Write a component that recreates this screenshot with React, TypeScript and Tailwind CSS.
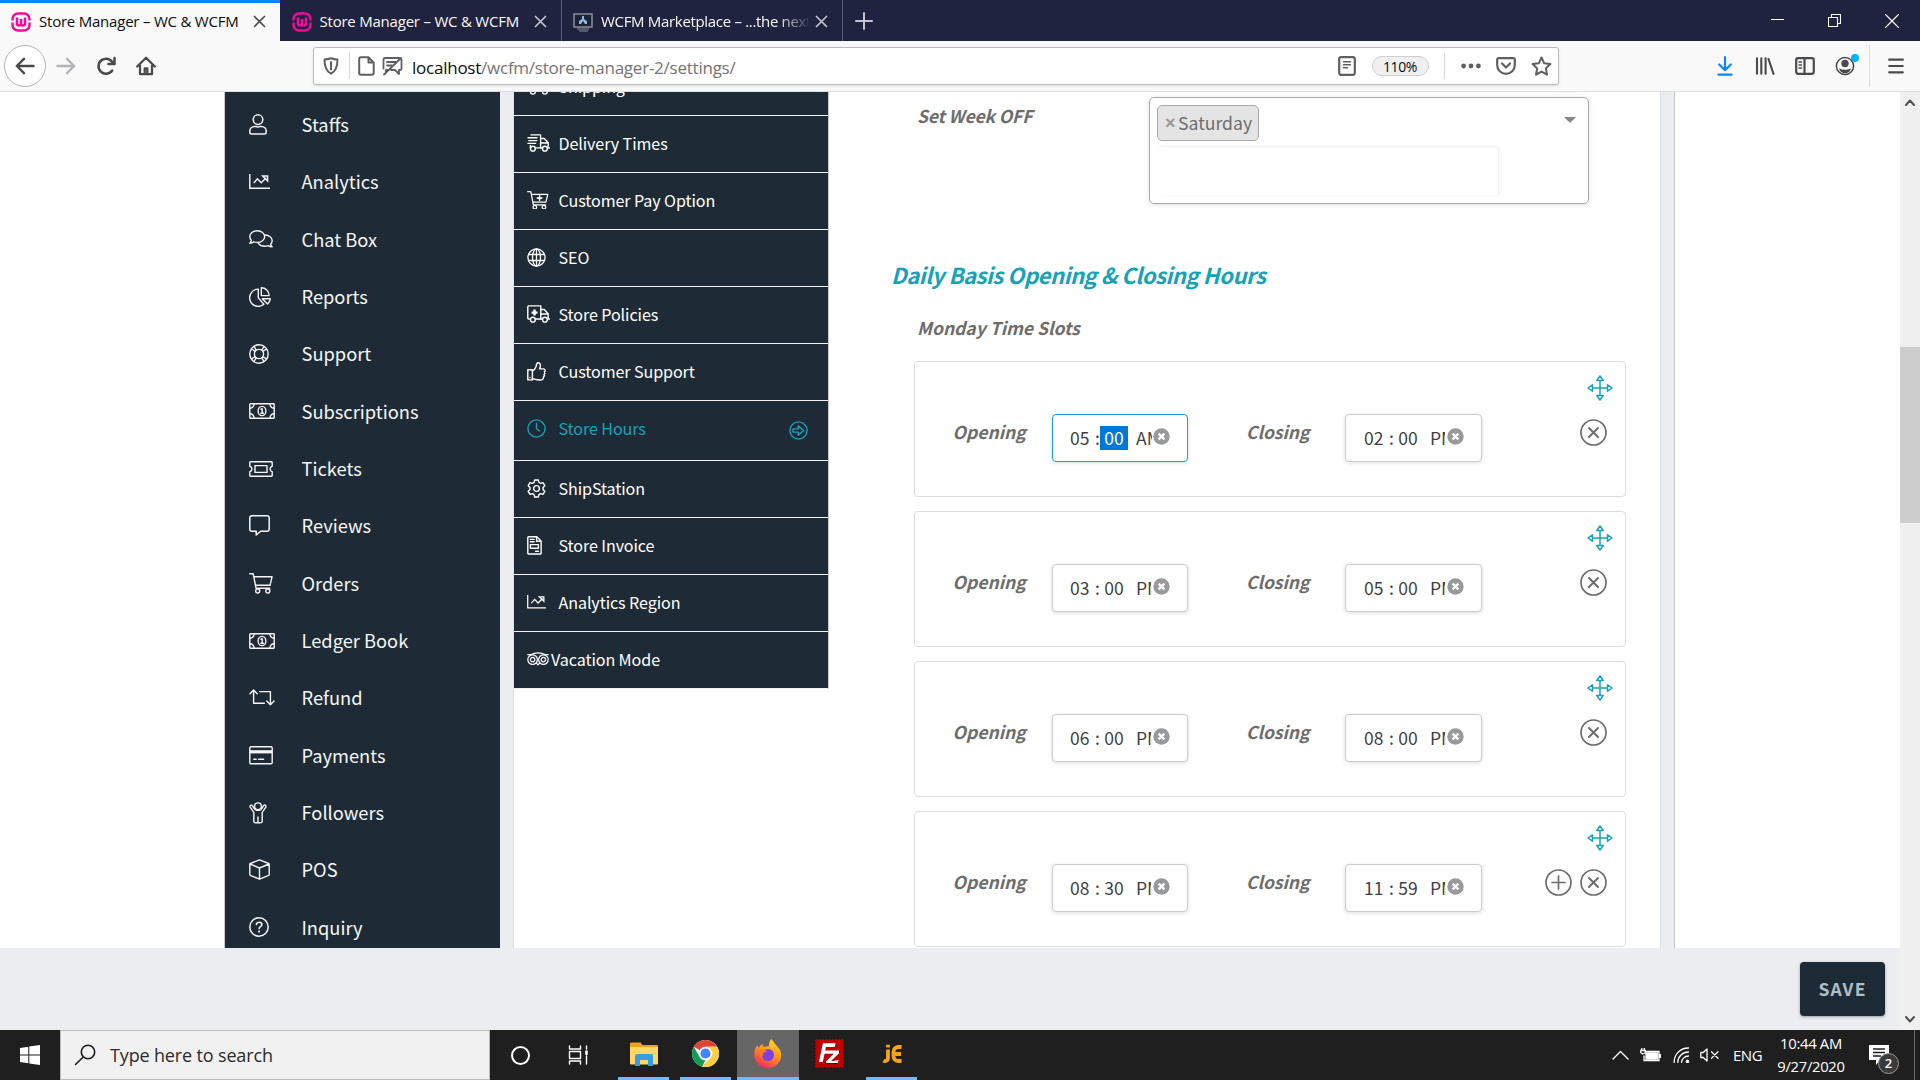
import type { ReactNode } from "react";
import clsx from "clsx";
import { SiFilezilla } from "react-icons/si";

type IconProps = {
  w: number;
  h: number;
  sw?: number;
  className?: string;
  children: ReactNode;
};

const Icon = ({ w, h, sw = 1.5, className, children }: IconProps) => (
  <svg
    width={w}
    height={h}
    viewBox={`0 0 ${w} ${h}`}
    fill="none"
    stroke="currentColor"
    strokeWidth={sw}
    strokeLinecap="round"
    strokeLinejoin="round"
    className={clsx("shrink-0", className)}
  >
    {children}
  </svg>
);

/* ---------- menu icons ---------- */

const UserIcon = () => (
  <Icon w={18} h={21}>
    <circle cx="9" cy="5.6" r="4.8" />
    <path d="M5.6 12.4h1.1q2.3 1 4.6 0h1.1a4.8 4.8 0 0 1 4.8 4.8v1.3a1.5 1.5 0 0 1-1.5 1.5H2.3a1.5 1.5 0 0 1-1.5-1.5v-1.3a4.8 4.8 0 0 1 4.8-4.8Z" />
  </Icon>
);

const ChartIcon = ({ w = 21, h = 16 }) => (
  <svg width={w} height={h} viewBox="0 0 21 16" fill="none" stroke="currentColor" strokeWidth="1.4" className="shrink-0">
    <path d="M.8 0v14.3H21M4.8 9l3.6-4.2 3.8 4 5-5" />
    <path d="M13.6 2h5v5Z" />
  </svg>
);

const ChatIcon = () => (
  <Icon w={24} h={18} sw={1.4}>
    <path d="M8.2.8c4.2 0 7.5 2.6 7.5 5.8s-3.300 5.800-7.500 5.800c-1.200 0-2.400-.2-3.400-.6-.9.700-2.400 1.400-4 1.400.8-.9 1.400-1.900 1.600-2.800C1.300 9.400.8 8 .8 6.600.8 3.400 4 .8 8.200.8Z" />
    <path d="M16.200 5c3.900.1 7 2.500 7 5.600 0 1.400-.6 2.600-1.600 3.600.2 1 .8 1.900 1.500 2.600-1.500 0-3-.5-3.900-1.200-1.100.4-2.200.6-3.500.6-3 0-5.500-1.300-6.700-3.300" />
  </Icon>
);

const PieIcon = () => (
  <Icon w={22} h={20} sw={1.4}>
    <path d="M9.300 2.100v8.800l5.600 6.300a8.600 8.600 0 1 1-5.600-15.100Z" />
    <path d="M12.300.8a7.800 7.800 0 0 1 7.800 7.800h-7.800ZM13.300 11.800h8a7.800 7.800 0 0 1-2.700 5.200Z" />
  </Icon>
);

const RingIcon = () => (
  <Icon w={20} h={20} sw={1.4}>
    <circle cx="10" cy="10" r="9.200" />
    <circle cx="10" cy="10" r="4.600" />
    <path d="m2.600 5 3.600 2.300M5 2.600l2.300 3.600M15 2.600l-2.300 3.600M17.400 5l-3.600 2.300M2.600 15l3.600-2.300M5 17.400l2.300-3.600M15 17.400l-2.300-3.600M17.400 15l-3.600-2.300" />
  </Icon>
);

const MoneyIcon = () => (
  <Icon w={26} h={16} sw={1.4}>
    <rect x=".8" y=".8" width="24.400" height="14.400" rx=".6" />
    <path d="M1 5.200A4 4 0 0 0 5 1M21 1a4 4 0 0 0 4 4.200M1 10.800A4 4 0 0 1 5 15M21 15a4 4 0 0 1 4-4.200" />
    <ellipse cx="13" cy="8" rx="3.900" ry="4.600" />
    <path d="M12 6.200 13.200 5.700v4.600M11.900 10.300h2.600" />
  </Icon>
);

const TicketIcon = () => (
  <Icon w={24} h={16} sw={1.4}>
    <path d="M1.500.8h21a.7.7 0 0 1 .7.7v3.700a2.900 2.900 0 0 0 0 5.600v3.700a.7.7 0 0 1-.7.7h-21a.7.7 0 0 1-.7-.7v-3.700a2.900 2.900 0 0 0 0-5.600V1.500a.7.7 0 0 1 .7-.7Z" />
    <rect x="6" y="4.600" width="12" height="6.800" />
  </Icon>
);

const ReviewIcon = () => (
  <Icon w={21} h={21}>
    <path d="M2.800.8h15.400a2 2 0 0 1 2 2v11.400a2 2 0 0 1-2 2h-6.600L7.200 20v-3.800H2.800a2 2 0 0 1-2-2V2.800a2 2 0 0 1 2-2Z" />
  </Icon>
);

const CartIcon = ({ plus, scale = 1 }: { plus?: boolean; scale?: number }) => (
  <svg width={24 * scale} height={21 * scale} viewBox="0 0 24 21" fill="none" stroke="currentColor" strokeWidth="1.4" strokeLinecap="round" strokeLinejoin="round" className="shrink-0">
    <path d="M.8.8h3.400l2.900 14.500h13.700M4.900 3.700h18.200l-2.100 8.600H6.600" />
    <circle cx="8.700" cy="18" r="2" />
    <circle cx="18.800" cy="18" r="2" />
    {plus && <path d="M14 5.400v5M11.500 7.900h5" strokeWidth="1.800" />}
  </svg>
);

const RefundIcon = () => (
  <Icon w={26} h={17} sw={1.4}>
    <path d="M1 4.800 4.600 1l3.600 3.800M4.600 1.400v12.900h10.800M10.600 2.600h10.800v12.900M17.800 12l3.600 3.800L25 12" />
  </Icon>
);

const CardIcon = () => (
  <Icon w={24} h={19} sw={1.4}>
    <rect x=".8" y=".8" width="22.400" height="17" rx="1.200" />
    <path d="M1 5.800h22" strokeWidth="3.200" strokeLinecap="butt" />
    <path d="M4.800 13.300h2.400M9.600 13.300h5" />
  </Icon>
);

const ChildIcon = () => (
  <Icon w={18} h={22} sw={1.4}>
    <circle cx="9" cy="4.300" r="3.400" />
    <path d="M5.600 7.200 3.400 3.700a1.300 1.300 0 0 0-2.200 1.400l3.600 5.200v9a1.400 1.400 0 0 0 1.400 1.400h5.600a1.400 1.400 0 0 0 1.400-1.400v-9l3.600-5.200a1.300 1.300 0 0 0-2.200-1.400l-2.200 3.500M7 8.200h4M9 15v5.500" />
  </Icon>
);

const CubeIcon = () => (
  <Icon w={21} h={21} sw={1.4}>
    <path d="m10.500.8 9.200 3.700a.8.8 0 0 1 .5.800v10.200a.9.900 0 0 1-.5.800l-9.200 3.900-9.200-3.900a.9.900 0 0 1-.5-.8V5.300a.8.800 0 0 1 .5-.8ZM1 5l9.500 4 9.500-4M10.500 9v11" />
  </Icon>
);

const HelpIcon = () => (
  <Icon w={20} h={20} sw={1.5}>
    <circle cx="10" cy="10" r="9.200" />
    <path d="M7.300 7.600c.2-1.600 1.400-2.300 2.800-2.300 1.600 0 2.800 1 2.800 2.400 0 2-2.800 2-2.800 4" />
    <path d="M10.100 14.500v.1" strokeWidth="2.200" />
  </Icon>
);

const TruckIcon = ({ kind }: { kind: "fast" | "medic" }) => (
  <Icon w={23} h={18} sw={1.4}>
    {kind === "fast" ? (
      <path d="M4 .9h9.600v13H8.400M1 3.700h9M1.800 6.600h8M1 9.400h7.600M3.400 11.500v2.500" />
    ) : (
      <path d="M3.400 14H1.600a.8.800 0 0 1-.8-.8V1.700a.8.800 0 0 1 .8-.8h12.200V14H8.400" />
    )}
    {kind === "medic" && <path d="M7.500 4.600v6M4.500 7.600h6" strokeWidth="2.400" strokeLinecap="butt" />}
    <path d="M13.800 4.500h3.400l4 4.200V14h1.200M13.800 9H21M13.800 14h1.400" />
    <circle cx="5.900" cy="14.700" r="2.400" />
    <circle cx="17.900" cy="14.700" r="2.400" />
  </Icon>
);

const GlobeIcon = () => (
  <Icon w={19} h={19} sw={1.3}>
    <circle cx="9.500" cy="9.500" r="8.600" />
    <ellipse cx="9.500" cy="9.500" rx="4" ry="8.600" />
    <path d="M1.600 6.500h15.800M1.600 12.500h15.800M9.500 1v17" />
  </Icon>
);

const ThumbIcon = () => (
  <Icon w={19} h={19} sw={1.4}>
    <path d="M.8 7.700h4.600v10.200H.8Z" />
    <path d="M5.400 9.200c1.800-1.200 3-2.700 3.600-4.400.3-1 .3-4 2-4 2.700 0 3 3 1.500 6.100h4a1.600 1.600 0 0 1 .8 3c.8.900.6 2-.3 2.700.5.900.2 1.900-.6 2.500.2 1.800-.9 2.900-3 2.900-3.800 0-5.300-.6-8-1.400" />
    <path d="M3 15.400v.1" />
  </Icon>
);

const ClockIcon = () => (
  <Icon w={19} h={19} sw={1.4}>
    <circle cx="9.500" cy="9.500" r="8.600" />
    <path d="M9.500 4.300v5.400l3 2.300" />
  </Icon>
);

const GearIcon = () => (
  <Icon w={19} h={19} sw={1.4}>
    <path d="M7.700 1h3.600l.6 2.400 1.700 1 2.400-.8 1.800 3.100-1.800 1.700v2.200l1.800 1.700-1.800 3.100-2.400-.8-1.700 1-.6 2.400H7.700l-.6-2.400-1.700-1-2.400.8-1.800-3.100L3 10.600V8.400L1.200 6.700 3 3.600l2.400.8 1.700-1Z" />
    <circle cx="9.500" cy="9.500" r="2.900" />
  </Icon>
);

const InvoiceIcon = () => (
  <Icon w={15} h={19} sw={1.4}>
    <path d="M.8 1.600a.8.800 0 0 1 .8-.8h8.200l4.300 4.300v12.100a.8.800 0 0 1-.8.800H1.600a.8.800 0 0 1-.8-.8ZM9.600 1v4.300H14M3.300 3.400h3.800M3.300 5.700h3.800M3.400 8.600h8v3.700h-8ZM8.600 15.200h2.800" />
  </Icon>
);

const OwlIcon = () => (
  <Icon w={22} h={14} sw={1.2}>
    <circle cx="5.600" cy="7.600" r="4.800" />
    <circle cx="16.400" cy="7.600" r="4.800" />
    <circle cx="5.600" cy="7.600" r="2.200" />
    <circle cx="16.400" cy="7.600" r="2.200" />
    <path d="M.8 2.600h3.400C8 .4 14 .4 17.800 2.600h3.400M9.400 10.800 11 13l1.600-2.200" />
  </Icon>
);

const ArrowCircle = () => (
  <Icon w={19} h={19} sw={1.4} className="mt-[5px]">
    <circle cx="9.500" cy="9.500" r="8.600" />
    <path d="M4 7.900h5.200V4.700l5.600 4.800-5.600 4.800v-3.200H4Z" />
  </Icon>
);

/* ---------- data ---------- */

const sidebar: { label: string; icon: ReactNode }[] = [
  { label: "Staffs", icon: <UserIcon /> },
  { label: "Analytics", icon: <ChartIcon /> },
  { label: "Chat Box", icon: <ChatIcon /> },
  { label: "Reports", icon: <PieIcon /> },
  { label: "Support", icon: <RingIcon /> },
  { label: "Subscriptions", icon: <MoneyIcon /> },
  { label: "Tickets", icon: <TicketIcon /> },
  { label: "Reviews", icon: <ReviewIcon /> },
  { label: "Orders", icon: <CartIcon /> },
  { label: "Ledger Book", icon: <MoneyIcon /> },
  { label: "Refund", icon: <RefundIcon /> },
  { label: "Payments", icon: <CardIcon /> },
  { label: "Followers", icon: <ChildIcon /> },
  { label: "POS", icon: <CubeIcon /> },
  { label: "Inquiry", icon: <HelpIcon /> },
];

const settingsTabs: { label: string; icon: ReactNode; active?: boolean }[] = [
  { label: "Shipping", icon: <TruckIcon kind="medic" /> },
  { label: "Delivery Times", icon: <TruckIcon kind="fast" /> },
  { label: "Customer Pay Option", icon: <CartIcon plus scale={0.9} /> },
  { label: "SEO", icon: <GlobeIcon /> },
  { label: "Store Policies", icon: <TruckIcon kind="medic" /> },
  { label: "Customer Support", icon: <ThumbIcon /> },
  { label: "Store Hours", icon: <ClockIcon />, active: true },
  { label: "ShipStation", icon: <GearIcon /> },
  { label: "Store Invoice", icon: <InvoiceIcon /> },
  { label: "Analytics Region", icon: <ChartIcon w={19} h={14.5} /> },
  { label: "Vacation Mode", icon: <OwlIcon /> },
];

const slots = [
  { open: ["05", "00", "AM"], close: ["02", "00", "PM"], focused: true },
  { open: ["03", "00", "PM"], close: ["05", "00", "PM"] },
  { open: ["06", "00", "PM"], close: ["08", "00", "PM"] },
  { open: ["08", "30", "PM"], close: ["11", "59", "PM"], last: true },
];

/* ---------- browser chrome ---------- */

const WooLogo = () => (
  <svg width="20" height="20" viewBox="0 0 20 20" fill="none" stroke="#f5089b" className="shrink-0">
    <path d="M1.500 8.500V7A5.500 5.500 0 0 1 7 1.500h6A5.500 5.500 0 0 1 18.500 7v1.500M1.500 10.500V13A5.500 5.500 0 0 0 7 18.500h6a5.500 5.500 0 0 0 5.500-5.500v-2.500" strokeWidth="2.400" />
    <path d="M6 5.500v6a2 2 0 0 0 4 0V7v4.500a2 2 0 0 0 4 0v-6" strokeWidth="2.500" />
  </svg>
);

const MonitorLogo = () => (
  <svg width="20" height="20" viewBox="0 0 20 20" className="shrink-0">
    <rect x="1" y="2" width="18" height="13" fill="#1a2433" stroke="#8a8f99" strokeWidth="1.500" />
    <path d="M9 4h2v3l3 2v3h-2l-2-3-2 3H6V9l3-2Z" fill="#8fb7dd" />
    <path d="M4 17h12M6 19h9" stroke="#8a8f99" strokeWidth="1.200" />
  </svg>
);

const CloseX = () => (
  <Icon w={13} h={13} sw={1.7}>
    <path d="m1.500 1.500 10 10M11.500 1.500l-10 10" />
  </Icon>
);

const Tab = ({ title, logo, active, faded }: { title: string; logo: ReactNode; active?: boolean; faded?: boolean }) => (
  <div
    className={clsx(
      "flex h-[41px] shrink-0 items-center",
      active
        ? "w-[280px] border-t-[3px] border-[#0a84ff] bg-[#f9f9fa] pb-[1px] pl-[11px] text-[#0c0c0d]"
        : "w-[281.500px] border-r border-[#5c5e78] pl-[11.500px] pt-[2px] text-[#f9f9fa]"
    )}
  >
    {logo}
    <span
      className={clsx(
        "ml-2 w-[207px] overflow-hidden whitespace-nowrap text-[15px]",
        faded ? "tracking-[-0.32px] [mask-image:linear-gradient(to_right,#000_85%,transparent_102%)]" : "tracking-[-0.22px]"
      )}
    >
      {title}
    </span>
    <span className={clsx("ml-[7px]", active ? "text-[#4a4a4c]" : "text-[#c3c4ce]")}>
      <CloseX />
    </span>
  </div>
);

const TabBar = () => (
  <div className="flex h-[41px] shrink-0 bg-[#202340] text-white">
    <Tab title="Store Manager – WC & WCFM" logo={<WooLogo />} active />
    <Tab title="Store Manager – WC & WCFM" logo={<WooLogo />} />
    <Tab title="WCFM Marketplace – ...the next" logo={<MonitorLogo />} faded />
    <div className="flex flex-1 items-center pl-[12px] text-[#c3c4ce]">
      <Icon w={18} h={18} sw={2}>
        <path d="M9 1v16M1 9h16" />
      </Icon>
    </div>
    <div className="flex items-center gap-[44px] pr-[21px]">
      <Icon w={13} h={13} sw={1}>
        <path d="M0 5.500h13" />
      </Icon>
      <Icon w={13} h={13} sw={1.1}>
        <path d="M.5 3.500h9v9h-9ZM3.500 3.500v-3h9v9h-3" />
      </Icon>
      <Icon w={14} h={14} sw={1.1}>
        <path d="m.5.5 13 13M13.500.5l-13 13" />
      </Icon>
    </div>
  </div>
);

const NavBar = () => (
  <div className="flex h-[51px] shrink-0 items-center border-b border-[#dcdcde] bg-[#f9f9fa] text-[#4a4a4c]">
    <div className="ml-1 flex size-[42px] items-center justify-center rounded-full border border-[#b5b5b7] bg-white">
      <Icon w={20} h={18} sw={2.4}>
        <path d="M18.500 9H2M9 1.800 1.800 9 9 16.200" />
      </Icon>
    </div>
    <Icon w={20} h={18} sw={2.4} className="ml-[10px] text-[#b5b5b7]">
      <path d="M1.500 9H18M11 1.800 18.200 9 11 16.200" />
    </Icon>
    <Icon w={20} h={20} sw={2.5} className="ml-[20px]">
      <path d="M16.200 14.500a7.500 7.500 0 1 1 .6-7.500M18.500 2v6h-6" />
    </Icon>
    <Icon w={20} h={20} sw={2.3} className="ml-[20px]">
      <path d="M1.200 10.500 10 1.700l8.800 8.800M4 9v9.200h12V9M8.700 18v-5.500h2.600V18" />
    </Icon>

    <div className="ml-[157px] flex h-[38px] w-[1246px] items-center rounded-[3px] border border-[#bcbcbe] bg-white shadow-sm">
      <Icon w={16} h={18} sw={2} className="ml-[9px] text-[#606062]">
        <path d="M8 1.200c2.300.9 4.400 1.200 6.500 1.300 0 6.500-1 11.600-6.500 14.200C2.500 14.100 1.500 9 1.500 2.500 3.600 2.400 5.700 2.100 8 1.200ZM8 5v7.500" />
      </Icon>
      <div className="ml-[10px] h-[26px] w-px bg-[#d7d7db]" />
      <Icon w={17} h={20} sw={2} className="ml-[8px] text-[#606062]">
        <path d="M3 1.200h7.500l5.200 5.300V17a1.800 1.800 0 0 1-1.800 1.800H3A1.800 1.800 0 0 1 1.200 17V3A1.800 1.800 0 0 1 3 1.200ZM10.500 1.500v5h5" />
      </Icon>
      <Icon w={21} h={20} sw={1.8} className="ml-[7px] text-[#606062]">
        <path d="M3 2h15a1.500 1.500 0 0 1 1.500 1.500v9A1.500 1.500 0 0 1 18 14h-1v4l-4-4H9M6 14H4l-.5 3.500M3 2A1.500 1.500 0 0 0 1.500 3.500v9M5 6h9M5 9.500h5M2 18.500 19 2" />
      </Icon>
      <div className="ml-[9px] mt-[3px] flex-1 text-[17px] tracking-[-0.24px] text-[#0c0c0d]">
        localhost<span className="text-[#737373]">/wcfm/store-manager-2/settings/</span>
      </div>
      <Icon w={18} h={20} sw={2.2} className="text-[#606062]">
        <rect x="1.200" y="1.200" width="15.600" height="17.600" rx="2" />
        <path d="M5.500 5.700h7M5.500 8.700h7M5.500 11.700h4" strokeWidth="1.400" />
      </Icon>
      <div className="ml-[16px] flex h-[20px] w-[57px] items-center justify-center rounded-full border border-[#cfcfd1] bg-[#f0f0f1] pt-px text-[14px] tracking-[-0.4px] text-[#0c0c0d]">
        110%
      </div>
      <div className="ml-[15px] h-[26px] w-px bg-[#d7d7db]" />
      <svg width="20" height="6" className="ml-[16px] fill-[#606062]">
        <circle cx="2.600" cy="3" r="2.400" />
        <circle cx="10" cy="3" r="2.400" />
        <circle cx="17.400" cy="3" r="2.400" />
      </svg>
      <Icon w={20} h={18} sw={2.2} className="ml-[15px] text-[#606062]">
        <path d="M2.600 1.200h14.800a1.400 1.400 0 0 1 1.400 1.400v5.600a8.800 8.600 0 0 1-17.600 0V2.600a1.400 1.400 0 0 1 1.400-1.400ZM6 6.500l4 4 4-4" />
      </Icon>
      <Icon w={21} h={20} sw={2} className="ml-[15px] mr-[6.500px] text-[#606062]">
        <path d="m10.500 1.500 2.700 5.800 6.200.8-4.600 4.300 1.200 6.300-5.500-3.100L5 18.700l1.200-6.300L1.600 8.100l6.200-.8Z" />
      </Icon>
    </div>

    <Icon w={16} h={20} sw={2.2} className="ml-[158px] text-[#0a84ff]">
      <path d="M8 1.200V14M2.200 8.500 8 14.200l5.800-5.700M1.500 18.700h13" />
    </Icon>
    <Icon w={20} h={18} sw={2.1} className="ml-[22px]">
      <path d="M2 1.200v15.600M6.300 1.200v15.600M10.600 1.200v15.600M13.500 2l5 14.800" />
    </Icon>
    <Icon w={20} h={18} sw={2.2} className="ml-[20px]">
      <rect x="1.200" y="1.200" width="17.600" height="15.600" rx="2" />
      <path d="M9.500 1.500v15" />
      <path d="M4 5h2.500M4 8h2.500M4 11h2.500" strokeWidth="1.300" />
    </Icon>
    <div className="relative ml-[20px]">
      <svg width="20" height="20" viewBox="0 0 20 20">
        <circle cx="10" cy="10" r="8.600" fill="none" stroke="#4a4a4c" strokeWidth="1.500" />
        <circle cx="10" cy="7.500" r="3.700" fill="#4a4a4c" />
        <path d="M4 12.500q6 2.500 12 0-1.500 4.700-6 4.700T4 12.500Z" fill="#4a4a4c" />
      </svg>
      <span className="absolute -right-[4px] -top-[2px] size-2 rounded-full bg-[#00b3f4]" />
    </div>
    <div className="ml-[14px] h-[42px] w-px bg-[#dcdcde]" />
    <Icon w={16} h={16} sw={2.2} className="ml-[18px]">
      <path d="M1.200 1.700h13.600M1.200 8h13.600M1.200 14.300h13.600" />
    </Icon>
  </div>
);

/* ---------- page ---------- */

const Sidebar = () => (
  <nav className="h-full w-[276px] shrink-0 border-l border-[#c4c8cc] bg-[#1e2b36] pt-[4px] text-[#f5f6f7]">
    {sidebar.map(({ label, icon }) => (
      <div key={label} className="flex h-[57.340px] items-center pl-6">
        <span className="flex w-[52.500px] items-center">{icon}</span>
        <span className="pb-[1.500px] text-[18.300px] leading-6">{label}</span>
      </div>
    ))}
  </nav>
);

const SettingsMenu = () => (
  <div className="-mt-[33px] w-[315px] shrink-0 self-start border-r border-[#c9cccf] bg-[#1e2b36] text-white">
    {settingsTabs.map(({ label, icon, active }) => (
      <div
        key={label}
        className={clsx(
          "flex items-center border-b border-[#f2f3f4] pl-[13px] pr-5",
          active ? "h-[60px] pb-[5px] text-[#17a2b8]" : "h-[57px] pb-[2px]"
        )}
      >
        <span className={clsx("flex items-center", label === "Vacation Mode" ? "w-[24px]" : "w-[31.500px]")}>{icon}</span>
        <span className="flex-1 text-[16.100px] leading-6 tracking-[-0.09px]">{label}</span>
        {active && <ArrowCircle />}
      </div>
    ))}
  </div>
);

const Label = ({ children, className }: { children: ReactNode; className?: string }) => (
  <span className={clsx("whitespace-nowrap text-[17.500px] font-bold italic leading-6 text-[#6d6d6d]", className)}>{children}</span>
);

const TimeInput = ({ value, focused, className }: { value: string[]; focused?: boolean; className?: string }) => (
  <div
    className={clsx(
      "flex h-[48px] items-center rounded-[4px] border bg-white pb-px text-[17.500px] leading-6 text-[#3f3f44] shadow-[0_1px_4px_rgba(0,0,0,0.14)]",
      focused ? "border-[#17a2d4]" : "border-[#cccccc]",
      className
    )}
  >
    <span className="w-[28px] pl-[3px]">{value[0]}</span>
    <span className="w-[5px]">:</span>
    <span className={clsx("h-6 w-[28px] text-center", focused && "bg-[#0078d7] text-white")}>{value[1]}</span>
    <span className={clsx("ml-[8px] overflow-hidden", value[2] === "AM" ? "w-[16px]" : "w-[15px]")}>{value[2]}</span>
    <svg width="17" height="17" viewBox="0 0 17 17" className={clsx("mb-[3px] shrink-0", value[2] === "AM" ? "ml-[1px]" : "ml-[2px]")}>
      <circle cx="8.500" cy="8.500" r="8.200" fill="#98999b" />
      <path d="m5.600 5.600 5.800 5.800M11.400 5.600l-5.800 5.800" stroke="#fff" strokeWidth="2.400" />
    </svg>
  </div>
);

const MoveIcon = () => (
  <Icon w={26} h={26} sw={1.5} className="text-[#17a2b8]">
    <path d="M13 5.500v15M5.500 13h15M9.800 5.500 13 1l3.200 4.500ZM9.800 20.500 13 25l3.200-4.500ZM5.500 9.800 1 13l4.500 3.200ZM20.500 9.800 25 13l-4.500 3.200Z" />
  </Icon>
);

const RoundButton = ({ plus }: { plus?: boolean }) => (
  <Icon w={27} h={27} sw={1.7} className="text-[#6d6d6d]">
    <circle cx="13.500" cy="13.500" r="12.500" />
    {plus ? <path d="M13.500 7v13M7 13.500h13" /> : <path d="m9 9 9 9M18 9l-9 9" strokeWidth="2" />}
  </Icon>
);

const SlotCard = ({ slot }: { slot: (typeof slots)[number] }) => (
  <div className="flex h-[136px] w-[712px] items-start rounded-[4px] border border-[#dedede] pl-[37.500px]">
    <Label className="mt-[58px] w-[99.500px]">Opening</Label>
    <div className="mt-[52px]">
      <TimeInput value={slot.open} focused={slot.focused} className="w-[136px] pl-[14px]" />
    </div>
    <Label className="ml-[58px] mt-[58px] w-[99px]">Closing</Label>
    <div className="mt-[52px]">
      <TimeInput value={slot.close} className="w-[137px] pl-[15px]" />
    </div>
    <div className="ml-auto mr-[12px] mt-[13px] flex flex-col items-end">
      <MoveIcon />
      <div className="mr-[6px] mt-[17.500px] flex gap-[8px]">
        {slot.last && <RoundButton plus />}
        <RoundButton />
      </div>
    </div>
  </div>
);

const StoreHours = () => (
  <div className="flex-1 pl-[63px]">
    <div className="flex items-start pl-[25px] pt-[5px]">
      <Label className="mt-[7px] w-[232px] tracking-[-0.15px]">Set Week OFF</Label>
      <div className="flex h-[107px] w-[440px] justify-between rounded-[5px] border border-[#aaaaaa] py-[7px] pl-[7px] pr-[12px] shadow-[0_1px_5px_rgba(0,0,0,0.12)]">
        <div>
          <div className="flex h-[36px] w-[102px] items-center whitespace-nowrap rounded-[5px] border border-[#aaaaaa] bg-[#e4e4e4] pl-[7px] pb-px text-[17.600px] leading-6 text-[#6d6d6d]">
            <span className="w-[13px] font-['Liberation_Sans',sans-serif] text-[18px] font-bold text-[#999999]">×</span>
            Saturday
          </div>
          <div className="mt-[6px] h-[48px] w-[341px] rounded-[3px] shadow-[2px_0_3px_rgba(0,0,0,0.06),0_-1px_2px_rgba(0,0,0,0.04)]" />
        </div>
        <div className="mt-[12px] size-0 border-x-[6px] border-t-[6px] border-x-transparent border-t-[#888888]" />
      </div>
    </div>
    <h2 className="-ml-px mt-[56px] whitespace-nowrap text-[22px] font-bold italic leading-[29px] tracking-[-0.42px] text-[#17a2b8]">
      Daily Basis Opening &amp; Closing Hours
    </h2>
    <div className="mt-[27px] pl-[25px]">
      <Label className="block">Monday Time Slots</Label>
    </div>
    <div className="mt-[21px] flex flex-col gap-[14px] pl-[22px]">
      {slots.map((slot, i) => (
        <SlotCard key={i} slot={slot} />
      ))}
    </div>
  </div>
);

const ScrollBar = () => (
  <div className="flex h-full w-5 shrink-0 flex-col items-center bg-[#f0f0f0] text-[#505050]">
    <Icon w={10} h={7} sw={2} className="mt-[7px]">
      <path d="m1 6 4-4.500L9 6" />
    </Icon>
    <div className="mt-[241px] h-[176px] w-full bg-[#cdcdcd]" />
    <Icon w={10} h={7} sw={2} className="mb-[7px] mt-auto">
      <path d="m1 1 4 4.500L9 1" />
    </Icon>
  </div>
);

/* ---------- taskbar ---------- */

const TaskbarApp = ({ children, running, focused }: { children: ReactNode; running?: boolean; focused?: boolean }) => (
  <div className={clsx("flex h-[50px] w-[62px] flex-col items-center", focused && "bg-[#666666]")}>
    <div className="flex flex-1 items-center">{children}</div>
    <div className={clsx("h-[3px]", focused ? "w-full" : "w-[51px]", running && "bg-[#76b9ed]")} />
  </div>
);

const Taskbar = () => (
  <div className="flex h-[50px] shrink-0 items-center bg-[#1f1f1f] text-white">
    <div className="flex w-[60px] justify-center">
      <svg width="20" height="20" viewBox="0 0 20 20" fill="#fff">
        <path d="M0 3 8.300 1.800v7.700H0ZM9.300 1.600 20 0v9.500H9.300ZM0 10.500h8.300v7.700L0 17ZM9.300 10.500H20V20L9.300 18.400Z" />
      </svg>
    </div>
    <div className="flex h-[50px] w-[430px] items-center border border-[#b9b9bb] bg-[#f1f1f1] pl-[13px] text-[#1b1b1b]">
      <Icon w={22} h={22} sw={1.6}>
        <circle cx="14" cy="8" r="6.700" />
        <path d="M9.200 13 1.500 20.500" />
      </Icon>
      <span className="ml-[14px] text-[18px] tracking-[-0.15px] text-[#2b2b2b]">Type here to search</span>
    </div>
    <div className="flex w-[60px] justify-center">
      <div className="size-[19px] rounded-full border-[2.500px] border-white" />
    </div>
    <div className="flex w-[62.500px] justify-center pr-[4px]">
      <Icon w={22} h={20} sw={1.4}>
        <path d="M1.500 1v3h11V1M1.500 6.500h11v7h-11ZM1.500 19v-3h11v3M18.500 1v3M18.500 11v8" />
        <path d="M18.500 6.500v2.500" strokeWidth="2.600" />
      </Icon>
    </div>
    <TaskbarApp running>
      <svg width="28" height="24" viewBox="0 0 28 24">
        <path d="M0 1.500A1 1 0 0 1 1 .5h9.500l2 2.500H27a1 1 0 0 1 1 1V22H0Z" fill="#e8a512" />
        <path d="M0 5h28v16.500a1 1 0 0 1-1 1H1a1 1 0 0 1-1-1Z" fill="#ffd766" />
        <path d="M5 24V14a2 2 0 0 1 2-2h14a2 2 0 0 1 2 2v10h-5v-6h-8v6Z" fill="#3a9be0" />
      </svg>
    </TaskbarApp>
    <TaskbarApp running>
      <svg width="27" height="27" viewBox="0 0 48 48">
        <circle cx="24" cy="24" r="24" fill="#fff" />
        <path d="M24 0a24 24 0 0 1 20.800 12H24a12 12 0 0 0-10.400 6L3.200 12A24 24 0 0 1 24 0Z" fill="#db4437" />
        <path d="M3.200 12 13.600 30A12 12 0 0 0 24 36l-6 11.200A24 24 0 0 1 3.200 12Z" fill="#0f9d58" />
        <path d="M44.800 12A24 24 0 0 1 18 47.200L34.400 30A12 12 0 0 0 32.500 15.500L24 12Z" fill="#ffcd40" />
        <circle cx="24" cy="24" r="11.500" fill="#fff" />
        <circle cx="24" cy="24" r="9" fill="#4285f4" />
      </svg>
    </TaskbarApp>
    <TaskbarApp running focused>
      <svg width="29" height="29" viewBox="0 0 29 29">
        <defs>
          <linearGradient id="fox" x1=".8" y1="0" x2=".3" y2="1">
            <stop offset="0" stopColor="#ffe226" />
            <stop offset=".45" stopColor="#ff9a1f" />
            <stop offset="1" stopColor="#f0295c" />
          </linearGradient>
        </defs>
        <path d="M18.500 0c2 2.500 2.500 4 5 6.500 3 3 4.700 5.500 4.700 9.300A13.500 13.200 0 0 1 1.200 16c0-4 1-7.500 3.300-10 .2 1.400.8 2.200 1.500 2.700C7 7 7.800 6 9.500 5c0 1.500.6 2.400 1.700 3 2-.6 3.300-.8 4.800-.5-.4-3 .6-5.500 2.500-7.500Z" fill="url(#fox)" />
        <circle cx="15" cy="16" r="6" fill="#7b3fe4" />
        <path d="M6 11c3-1.500 6-.5 8 1.500-2 .3-4 1.200-4 3s-1 2.500-2 2Z" fill="#ff7a1a" />
      </svg>
    </TaskbarApp>
    <TaskbarApp>
      <SiFilezilla className="size-[29px] text-[#bf0000] [background:linear-gradient(#fff,#fff)_center/70%_70%_no-repeat]" />
    </TaskbarApp>
    <TaskbarApp running>
      <svg width="20" height="20" viewBox="0 0 20 20" fill="none" stroke="#f9a11b" strokeWidth="3.800">
        <path d="M6 5.500V14a3 3 0 0 1-4.600 2.600M6 .8v2.600M19.500 3h-3a5 5 0 0 0-5 5v4a5 5 0 0 0 5 5h3M11 10h8" />
      </svg>
    </TaskbarApp>

    <div className="ml-auto flex h-full items-center">
      <Icon w={17} h={10} sw={1.4}>
        <path d="M1 9 8.500 1.500 16 9" />
      </Icon>
      <svg width="21" height="14" viewBox="0 0 21 14" className="ml-[11px]" stroke="#fff" fill="none" strokeWidth="1.300">
        <path d="M5 3.500h14v9H4v-5M20.300 6v4M1.800 0v2.500M4.300 0v2.500M.8 2.500h4.500v2.200L3 6 .8 4.700Z" />
        <path d="M6 5h11.500v6H6Z" fill="#fff" />
      </svg>
      <Icon w={17} h={16} sw={1.3} className="ml-[12px]">
        <path d="M1.200 15.500A14 14 0 0 1 15.500 1M4.800 15.500A10.500 10.500 0 0 1 15.500 5M8.500 15.500A7 7 0 0 1 15.500 9" />
        <circle cx="14.500" cy="14.300" r="1.200" fill="currentColor" />
      </Icon>
      <Icon w={19} h={14} sw={1.3} className="ml-[10px]">
        <path d="M.8 4.500h2.400L7 1v12L3.200 9.500H.8ZM11.500 3.800l6.500 6.500M18 3.800l-6.500 6.500" />
      </Icon>
      <span className="ml-[14px] w-[29px] text-[15px] tracking-[-0.5px]">ENG</span>
      <div className="ml-[13px] mr-px flex w-[72px] flex-col items-center text-[14.800px] leading-[23px] tracking-[-0.3px]">
        <span className="whitespace-nowrap">10:44 AM</span>
        <span>9/27/2020</span>
      </div>
      <div className="relative ml-[21px] w-[45px]">
        <svg width="20" height="22" viewBox="0 0 20 22">
          <path d="M0 1h20v15h-9l-4 5v-5H0Z" fill="#fff" />
          <path d="M4 5h12M4 8.500h12M4 12h8" stroke="#1f1f1f" strokeWidth="1.300" />
        </svg>
        <span className="absolute left-[9px] top-[9px] flex size-[21px] items-center justify-center rounded-full border border-[#9a9a9a] bg-[#3a3a3a] text-[13px] font-semibold">
          2
        </span>
      </div>
      <div className="mr-[5px] h-full w-px bg-[#6a6a6a]" />
    </div>
  </div>
);

export default function App() {
  return (
    <div className="flex h-[1080px] w-[1920px] flex-col overflow-hidden bg-white font-['Open_Sans','Noto_Sans',sans-serif]">
      <TabBar />
      <NavBar />
      <div className="flex h-[938px] shrink-0 font-['Noto_Sans_CJK_SC','Noto_Sans',sans-serif]">
        <div className="flex min-w-0 flex-1 flex-col">
          <div className="flex h-[856px] shrink-0 overflow-hidden pl-[224px]">
            <Sidebar />
            <div className="w-[14px] shrink-0 border-r border-[#dcdfe3] bg-[#ebedf1]" />
            <SettingsMenu />
            <StoreHours />
            <div className="w-[15px] shrink-0 border-x border-l-[#dcdfe3] border-r-[#c4c8cc] bg-[#ebedf1]" />
            <div className="w-[225px] shrink-0" />
          </div>
          <div className="flex flex-1 justify-end bg-[#ebedf1] pr-[15px] pt-[14px]">
            <button className="h-[54px] w-[85px] rounded-[4px] bg-[#1c2b36] text-[17.500px] font-bold tracking-[1.200px] text-[#b0bec5] shadow-[0_1px_3px_rgba(0,0,0,0.35)]">
              SAVE
            </button>
          </div>
        </div>
        <ScrollBar />
      </div>
      <Taskbar />
    </div>
  );
}
